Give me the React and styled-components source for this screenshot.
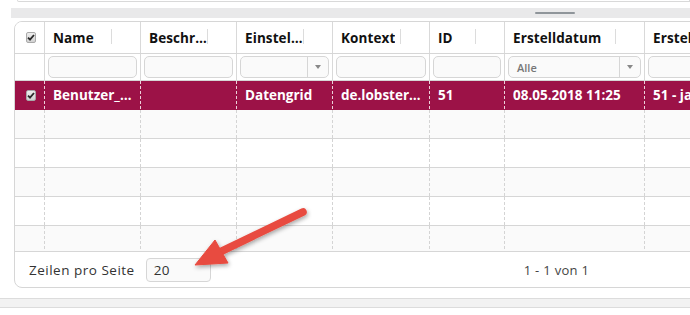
import React from 'react';
import styled, { createGlobalStyle } from 'styled-components';

const GlobalStyle = createGlobalStyle`
  body {
    margin: 0;
    background: #fff;
    font-family: "Open Sans", "Liberation Sans", sans-serif;
  }
`

const COLS = [30, 96, 96, 96, 97, 75, 140, 120];

const Page = styled.div`
  position: relative;
  width: 690px;
  height: 315px;
  overflow: hidden;
`

const TopCardEdge = styled.div`
  height: 1px;
  margin-left: 17px;
  border: 1px solid #d9d9d9;
  border-top: none;
  border-bottom-left-radius: 6px;
`

const Band = styled.div`
  margin: 6px 0 0 11px;
  height: 10px;
  background: #e9e9ea;
  display: flex;
  justify-content: flex-start;
  padding-left: 524px;
`

const Handle = styled.div`
  width: 40px;
  height: 2px;
  margin-top: 4px;
  background: #8f959a;
  border-radius: 1px;
`

const Grid = styled.div`
  margin: 3px 0 0 14px;
  width: 740px;
  border: 1px solid #d6d6d6;
  border-radius: 8px;
  overflow: hidden;
`

const Row = styled.div`
  display: flex;
  height: ${p => p.h}px;
  box-sizing: border-box;
  border-bottom: 1px solid ${p => p.edge || '#d6d6d6'};
  background: ${p => p.bg || '#fff'};
`

const Cell = styled.div`
  flex: 0 0 ${p => p.w}px;
  box-sizing: border-box;
  display: flex;
  align-items: center;
  padding: ${p => p.pad || '0 8px'};
  border-right: 1px ${p => (p.dashed ? 'dashed' : 'solid')} ${p => p.line || '#d9d9d9'};
  min-width: 0;
  position: relative;
`

const HeadText = styled.span`
  font-weight: 700;
  font-size: 13.5px;
  letter-spacing: 0.1px;
  color: #111;
  white-space: nowrap;
  overflow: hidden;
  text-overflow: ellipsis;
  max-width: ${p => p.max}px;
`

const HeadSep = styled.span`
  position: absolute;
  right: 28px;
  top: 7px;
  width: 1px;
  height: 15px;
  background: #dcdcdc;
`

const CellText = styled.span`
  font-weight: 700;
  font-size: 13.5px;
  color: #fff;
  white-space: nowrap;
  overflow: hidden;
  text-overflow: ellipsis;
`

const FilterInput = styled.div`
  flex: 1;
  height: 22px;
  box-sizing: border-box;
  border: 1px solid #d6d6d6;
  border-radius: 5px;
  background: #fafafa;
  display: flex;
  align-items: center;
`

const SelectLabel = styled.span`
  flex: 1;
  padding-left: 8px;
  font-size: 11px;
  font-weight: 600;
  color: #777;
`

const SelectArrow = styled.span`
  flex: 0 0 20px;
  height: 100%;
  border-left: 1px solid #d6d6d6;
  display: flex;
  align-items: center;
  justify-content: center;
  &::after {
    content: '';
    border-left: 3.5px solid transparent;
    border-right: 3.5px solid transparent;
    border-top: 4px solid #888;
  }
`

const Check = styled.span`
  width: 11px;
  height: 11px;
  box-sizing: border-box;
  border: 1px solid #a9a9a9;
  border-radius: 2px;
  background: linear-gradient(#eee, #d2d2d2);
  display: flex;
  align-items: center;
  justify-content: center;
  margin-left: 3px;
`

const Body = styled.div`
  height: 170px;
  overflow: hidden;
`

const Footer = styled.div`
  display: flex;
  align-items: center;
  height: 35px;
  padding-left: 14px;
  border-top: 1px solid #d6d6d6;
  font-size: 13.5px;
  letter-spacing: 0.5px;
  color: #333;
`

const PageSize = styled.div`
  width: 65px;
  height: 24px;
  box-sizing: border-box;
  margin-left: 11px;
  border: 1px solid #d6d6d6;
  border-radius: 4px;
  background: #fafafa;
  display: flex;
  align-items: center;
  padding-left: 7px;
  letter-spacing: 0.3px;
`

const Range = styled.span`
  margin-left: 313px;
  font-size: 13px;
  letter-spacing: 0.3px;
  color: #444;
`

const BottomBand = styled.div`
  margin-top: 10px;
  height: 8px;
  border-top: 1px solid #dcdcdc;
  border-bottom: 1px solid #dcdcdc;
  background: #f2f2f2;
`

const ArrowLayer = styled.svg`
  position: absolute;
  left: 0;
  top: 0;
  pointer-events: none;
`

const headers = ['Name', 'Beschreibung', 'Einstellungstyp', 'Kontext', 'ID', 'Erstelldatum', 'Erstellt von'];
const filters = ['input', 'input', 'select', 'input', 'input', 'alle', 'input'];
const selected = ['Benutzer_Einstellungen', '', 'Datengrid', 'de.lobster.datagrid', '51', '08.05.2018 11:25', '51 - jadmin'];

const CheckBox = () => (
  <Check>
    <svg width="8" height="7" viewBox="0 0 8 7">
      <path d="M1 3.6 L3 5.6 L7 1" fill="none" stroke="#2b2b2b" strokeWidth="1.8" />
    </svg>
  </Check>
)

const App = () => (
  <Page>
    <GlobalStyle />
    <TopCardEdge />
    <Band><Handle /></Band>
    <Grid>
      <Row h={32}>
        <Cell w={COLS[0]}><CheckBox /></Cell>
        {headers.map((h, i) => (
          <Cell key={h} w={COLS[i + 1]}>
            <HeadText max={COLS[i + 1] - 35}>{h}</HeadText>
            <HeadSep />
          </Cell>
        ))}
      </Row>
      <Row h={27}>
        <Cell w={COLS[0]} />
        {filters.map((f, i) => (
          <Cell key={i} w={COLS[i + 1]} pad="0 3px">
            <FilterInput>
              {f !== 'input' && <SelectLabel>{f === 'alle' ? 'Alle' : ''}</SelectLabel>}
              {f !== 'input' && <SelectArrow />}
            </FilterInput>
          </Cell>
        ))}
      </Row>
      <Body>
        <Row h={29} bg="#9c1247" edge="#9c1247">
          <Cell w={COLS[0]} dashed line="#ecd0da"><CheckBox /></Cell>
          {selected.map((t, i) => (
            <Cell key={i} w={COLS[i + 1]} dashed line="#ecd0da">
              <CellText>{t}</CellText>
            </Cell>
          ))}
        </Row>
        {[1, 2, 3, 4, 5].map(r => (
          <Row key={r} h={29} bg={r % 2 ? '#fafafa' : '#fff'}>
            {COLS.map((w, i) => (
              <Cell key={i} w={w} dashed line="#d4d4d4" />
            ))}
          </Row>
        ))}
      </Body>
      <Footer>
        Zeilen pro Seite
        <PageSize>20</PageSize>
        <Range>1 - 1 von 1</Range>
      </Footer>
    </Grid>
    <BottomBand />
    <ArrowLayer width="690" height="315">
      <defs>
        <filter id="sh" x="-20%" y="-20%" width="140%" height="140%">
          <feDropShadow dx="1" dy="2" stdDeviation="2" floodColor="#000" floodOpacity="0.35" />
        </filter>
      </defs>
      <g filter="url(#sh)" fill="#e84b3f" stroke="#e84b3f">
        <line x1="303" y1="212" x2="222" y2="251" strokeWidth="7.5" strokeLinecap="round" />
        <polygon points="195,265 215,240 228,263" strokeWidth="1" strokeLinejoin="round" />
      </g>
    </ArrowLayer>
  </Page>
)

export default App;
